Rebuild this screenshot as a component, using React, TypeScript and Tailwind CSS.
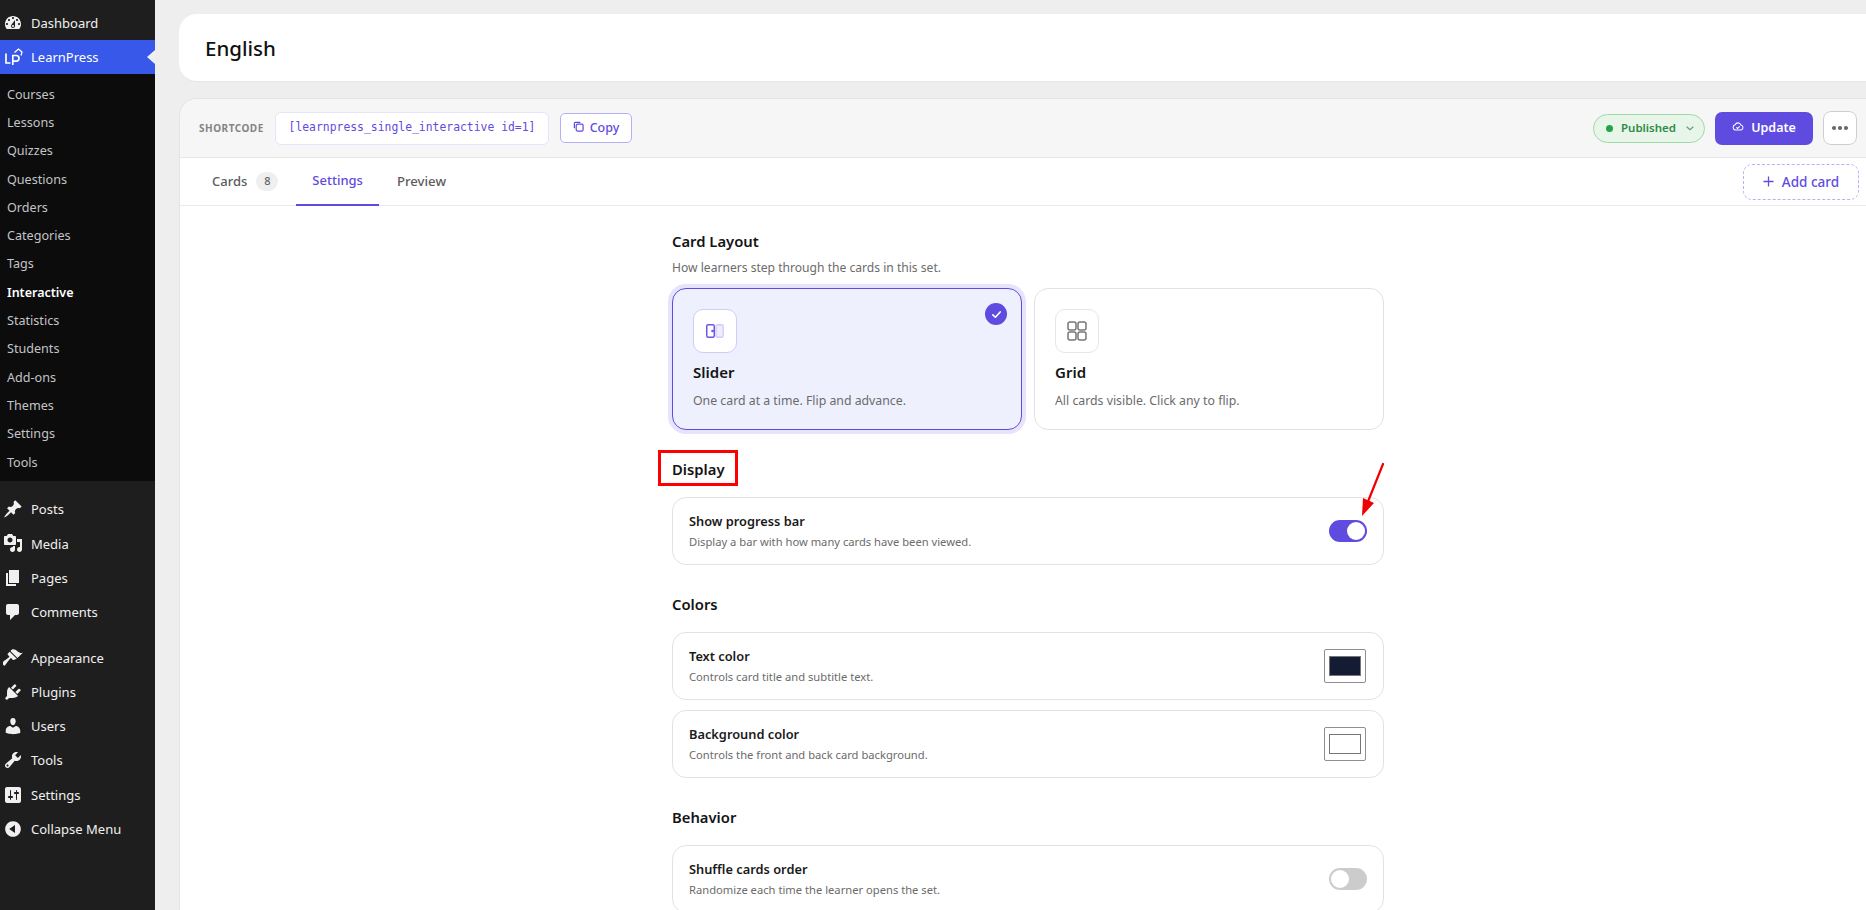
import React from "react";

const D: Record<string, string> = {
  dashboard: "M3.76 16h12.48c1.1-1.37 1.76-3.11 1.76-5 0-4.42-3.58-8-8-8s-8 3.58-8 8c0 1.89.66 3.63 1.76 5zM10 4c.55 0 1 .45 1 1s-.45 1-1 1-1-.45-1-1 .45-1 1-1zM6 6c.55 0 1 .45 1 1s-.45 1-1 1-1-.45-1-1 .45-1 1-1zm8 0c.55 0 1 .45 1 1s-.45 1-1 1-1-.45-1-1 .45-1 1-1zm-5.37 5.55L12 7v6c0 1.1-.9 2-2 2s-2-.9-2-2c0-.57.24-1.08.63-1.45zM4 10c.55 0 1 .45 1 1s-.45 1-1 1-1-.45-1-1 .45-1 1-1zm12 0c.55 0 1 .45 1 1s-.45 1-1 1-1-.45-1-1 .45-1 1-1zm-5 3c0-.55-.45-1-1-1s-1 .45-1 1 .45 1 1 1 1-.45 1-1z",
  posts: "M10.44 3.02l1.82-1.82 6.36 6.35-1.83 1.82c-1.05-.68-2.48-.57-3.41.36l-.75.75c-.92.93-1.04 2.35-.35 3.41l-1.83 1.82-2.41-2.41-2.8 2.79c-.42.42-3.38 2.71-3.8 2.29s1.86-3.39 2.28-3.81l2.79-2.79L4.1 9.36l1.83-1.82c1.05.69 2.48.57 3.4-.36l.75-.75c.93-.92 1.05-2.35.36-3.41z",
  media: "M13 11V4c0-.55-.45-1-1-1h-1.67L9 1H5L3.67 3H2c-.55 0-1 .45-1 1v7c0 .55.45 1 1 1h10c.55 0 1-.45 1-1zM7 4.5c1.38 0 2.5 1.12 2.5 2.5S8.38 9.5 7 9.5 4.5 8.38 4.5 7 5.62 4.5 7 4.5zM14 6h5v10.5c0 1.38-1.12 2.5-2.5 2.5S14 17.88 14 16.5s1.12-2.5 2.5-2.5c.17 0 .34.02.5.05V9h-3V6zm-4 8.05V13h2v3.5c0 1.38-1.12 2.5-2.5 2.5S7 17.88 7 16.5 8.12 14 9.5 14c.17 0 .34.02.5.05z",
  pages: "M6 15V2h10v13H6zm-1 1h8v2H3V5h2v11z",
  comments: "M5 2h9c1.1 0 2 .9 2 2v7c0 1.1-.9 2-2 2h-2l-5 5v-5H5c-1.1 0-2-.9-2-2V4c0-1.1.9-2 2-2z",
  appearance: "M14.48 11.06L7.41 3.99l1.5-1.5c.5-.56 2.3-.47 3.51.32 1.21.8 1.43 1.28 2.91 2.1 1.18.64 2.45 1.26 4.45.85zm-.71.71L6.7 4.7 4.93 6.47c-.39.39-.39 1.02 0 1.41l1.06 1.06c.39.39.39 1.03 0 1.42-.6.6-6.14 4.54-6.75 5.15-.39.39-.39 1.02 0 1.41l1.42 1.42c.39.39 1.02.39 1.41 0 .61-.61 4.55-6.15 5.15-6.75.39-.39 1.03-.39 1.42 0l1.06 1.06c.39.39 1.02.39 1.41 0z",
  plugins: "M13.11 4.36L9.87 7.6 8 5.73l3.24-3.24c.35-.34 1.05-.2 1.56.32.52.51.66 1.21.31 1.55zm-8 1.77l.91-1.12 9.01 9.01-1.19.84c-.71.71-2.63 1.16-3.82 1.16H6.14L4.9 17.26c-.59.59-1.54.59-2.12 0-.59-.58-.59-1.53 0-2.12l1.24-1.24v-3.88c0-1.13.4-3.19 1.09-3.89zm7.26 3.97l3.24-3.24c.34-.35 1.04-.21 1.55.31.52.51.66 1.21.31 1.55l-3.24 3.25z",
  users: "M10 9.25c-2.27 0-2.73-3.44-2.73-3.44C7 4.02 7.82 2 9.97 2c2.16 0 2.98 2.02 2.71 3.81 0 0-.41 3.44-2.68 3.44zm0 2.57L12.72 10c2.39 0 4.52 2.33 4.52 4.53v2.49s-3.65 1.13-7.24 1.13c-3.65 0-7.24-1.13-7.24-1.13v-2.49c0-2.25 1.94-4.48 4.47-4.48z",
  tools: "M16.68 9.77c-1.34 1.34-3.3 1.67-4.95.99l-5.41 6.52c-.99.99-2.59.99-3.58 0s-.99-2.59 0-3.57l6.52-5.42c-.68-1.65-.35-3.61.99-4.95 1.28-1.28 3.12-1.62 4.72-1.06l-2.89 2.89 2.82 2.82 2.86-2.87c.53 1.58.18 3.39-1.08 4.65zM3.81 16.21c.4.39 1.04.39 1.43 0 .4-.4.4-1.04 0-1.43-.39-.4-1.03-.4-1.43 0-.39.39-.39 1.03 0 1.43z",
  settings: "M18 16V4c0-1.1-.9-2-2-2H4c-1.1 0-2 .9-2 2v12c0 1.1.9 2 2 2h12c1.1 0 2-.9 2-2zM8 11h1c.55 0 1 .45 1 1s-.45 1-1 1H8v1.5c0 .28-.22.5-.5.5s-.5-.22-.5-.5V13H6c-.55 0-1-.45-1-1s.45-1 1-1h1V5.5c0-.28.22-.5.5-.5s.5.22.5.5V11zm5-2h-1c-.55 0-1-.45-1-1s.45-1 1-1h1V5.5c0-.28.22-.5.5-.5s.5.22.5.5V7h1c.55 0 1 .45 1 1s-.45 1-1 1h-1v5.5c0 .28-.22.5-.5.5s-.5-.22-.5-.5V9z",
  collapse: "M10 2.16c4.33 0 7.84 3.51 7.84 7.84s-3.51 7.84-7.84 7.84S2.16 14.33 2.16 10 5.71 2.16 10 2.16zm2 11.72V6.12L6.18 9.97z",
};

function Dash({ name }: { name: string }) {
  return (
    <svg viewBox="0 0 20 20" className="w-5 h-5 shrink-0" fill="#f0f0f0">
      <path d={D[name]} />
    </svg>
  );
}

function MenuRow({ icon, label, className = "" }: { icon: string; label: string; className?: string }) {
  return (
    <div className={`h-[34.3px] flex items-center pl-[3px] gap-2 text-[13px] text-[#f0f0f0] ${className}`}>
      <Dash name={icon} />
      <span className="pt-[2px]">{label}</span>
    </div>
  );
}

const subs = ["Courses", "Lessons", "Quizzes", "Questions", "Orders", "Categories", "Tags", "Interactive", "Statistics", "Students", "Add-ons", "Themes", "Settings", "Tools"];

function Sidebar() {
  return (
    <aside className="w-[155px] shrink-0 bg-[#1e1e1e] h-[910px] pt-[6px]">
      <MenuRow icon="dashboard" label="Dashboard" className="h-[34px]" />
      <div className="relative h-[34px] flex items-center pl-[4px] gap-[7px] bg-[#3858e9] text-[13px] text-white">
        <svg viewBox="0 0 20 20" className="w-5 h-5 shrink-0" fill="none" stroke="#fff" strokeWidth="1.7">
          <path d="M2 6.5v9.5h4.5" />
          <path d="M8.8 18V8.5h3.4a2.8 2.8 0 0 1 0 5.6H9" />
          <path d="M10.5 5.5l4-3.5 3.5 3-1 3.5" strokeWidth="1.3" />
        </svg>
        <span className="pt-[2px]">LearnPress</span>
        <span className="absolute right-0 top-[10px] w-0 h-0 border-y-[7px] border-y-transparent border-r-[8px] border-r-[#f0f0f0]" />
      </div>
      <div className="bg-[#0c0c0c] pt-[7px] h-[407px]">
        {subs.map((s) => (
          <div
            key={s}
            className={`h-[28.3px] flex items-center pl-[7px] ${s === "Interactive" ? "text-[12.5px] font-semibold text-white" : "text-[12.6px] text-[#c3c4c7]"}`}
          >
            {s}
          </div>
        ))}
      </div>
      <div className="pt-[11px]">
        {["posts:Posts", "media:Media", "pages:Pages", "comments:Comments"].map((x) => {
          const [i, l] = x.split(":");
          return <MenuRow key={l} icon={i} label={l} />;
        })}
      </div>
      <div className="pt-[11px]">
        {["appearance:Appearance", "plugins:Plugins", "users:Users", "tools:Tools", "settings:Settings", "collapse:Collapse Menu"].map((x) => {
          const [i, l] = x.split(":");
          return <MenuRow key={l} icon={i} label={l} className={l === "Collapse Menu" ? "text-[12.6px]" : ""} />;
        })}
      </div>
    </aside>
  );
}

function Toggle({ on }: { on: boolean }) {
  return on ? (
    <div className="w-[38px] h-[22px] rounded-full bg-[#5f4bdf] flex items-center justify-end pr-[2px] shrink-0">
      <div className="w-[18px] h-[18px] rounded-full bg-white" />
    </div>
  ) : (
    <div className="w-[38px] h-[22px] rounded-full bg-[#cccccc] flex items-center pl-[2px] shrink-0">
      <div className="w-[18px] h-[18px] rounded-full bg-white" />
    </div>
  );
}

function Swatch({ color }: { color: string }) {
  return (
    <div className="w-[42px] h-[34px] mr-px border border-[#8f8f8f] rounded-[2px] flex items-center justify-center bg-white shrink-0">
      <div className="w-[32px] h-[20px] border border-[#767676]" style={{ backgroundColor: color }} />
    </div>
  );
}

function Row({ title, desc, right }: { title: string; desc: string; right: React.ReactNode }) {
  return (
    <div className="h-[68px] border border-[#e2e2e2] rounded-[14px] pl-[16px] pr-[16px] flex items-center justify-between bg-white">
      <div className="flex flex-col">
        <div className="text-[12.8px] font-semibold text-[#1a1a1a] leading-[20px]">{title}</div>
        <div className="text-[11.2px] text-[#6b6b6b] leading-[18px] mt-[2px]">{desc}</div>
      </div>
      {right}
    </div>
  );
}

function LayoutCard({ active, title, desc, icon }: { active: boolean; title: string; desc: string; icon: React.ReactNode }) {
  return (
    <div
      className={`relative flex-1 h-[142px] rounded-[14px] pl-[20px] pt-[20px] ${
        active ? "border border-[#5f4bdf] bg-[#eef0fd] ring-4 ring-[#e6e3fa]" : "border border-[#e2e2e2] bg-white"
      }`}
    >
      <div className={`w-[44px] h-[44px] rounded-[10px] bg-white flex items-center justify-center border ${active ? "border-[#d0ccfa]" : "border-[#e6e6e6]"}`}>
        {icon}
      </div>
      <div className="mt-[8px] text-[15px] font-semibold text-[#141414] leading-[22px]">{title}</div>
      <div className="mt-[8px] text-[12.3px] text-[#6b6b6b] leading-[20px]">{desc}</div>
      {active && (
        <div className="absolute right-[14px] top-[14px] w-[22px] h-[22px] rounded-full bg-[#5f4bdf] flex items-center justify-center">
          <svg viewBox="0 0 12 12" className="w-[11px] h-[11px]" fill="none" stroke="#fff" strokeWidth="1.8" strokeLinecap="round" strokeLinejoin="round">
            <path d="M2 6.4 4.8 9 10 3.2" />
          </svg>
        </div>
      )}
    </div>
  );
}

function Heading({ children, className = "" }: { children: React.ReactNode; className?: string }) {
  return <div className={`text-[14.8px] font-semibold text-[#141414] leading-[22px] ${className}`}>{children}</div>;
}

export default function App() {
  return (
    <div className="relative flex w-[1866px] h-[910px] overflow-hidden bg-[#eeeeee]" style={{ fontFamily: '"Noto Sans", sans-serif' }}>
      <Sidebar />
      <main className="flex-1 min-w-0 pl-[24px] pt-[14px]">
        <div className="h-[68px] bg-white rounded-l-[18px] border-b border-[#e6e6e6] flex items-center pl-[26px] pt-[2px] text-[20.5px] font-medium text-[#111]">
          English
        </div>
        <div className="mt-[16px] bg-white rounded-tl-[18px] border-l border-t border-[#e4e4e4] h-[820px]">
          <div className="h-[59px] bg-[#f6f6f6] rounded-tl-[18px] border-b border-[#e8e8e8] flex items-center pl-[19px] pr-[9px]">
            <span className="text-[10px] font-bold tracking-[0.05em] text-[#848484] w-[76px]">SHORTCODE</span>
            <div className="w-[274px] h-[33px] bg-white border border-[#e4e4fb] rounded-[6px] flex items-center justify-center text-[11.4px] text-[#5f4bdf]" style={{ fontFamily: '"DejaVu Sans Mono", monospace' }}>
              [learnpress_single_interactive id=1]
            </div>
            <div className="ml-[11px] w-[72px] h-[30px] border border-[#b4b1fa] rounded-[5px] bg-white flex items-center justify-center gap-[6px] text-[12.5px] font-medium text-[#5f4bdf]">
              <svg viewBox="0 0 12 12" className="w-[11px] h-[11px] -mt-1" fill="none" stroke="#5f4bdf" strokeWidth="1.3">
                <rect x="3.5" y="3.5" width="7.5" height="7.5" rx="1.5" />
                <path d="M1.5 8V2.5a1 1 0 0 1 1-1H8" />
              </svg>
              Copy
            </div>
            <div className="ml-auto w-[112px] h-[29px] rounded-full bg-[#e8f5e9] border border-[#9fd8a8] flex items-center pl-[12px] text-[11.5px] font-semibold text-[#2e8b4a]">
              <span className="w-[7px] h-[7px] rounded-full bg-[#22a54a] mr-[8px]" />
              Published
              <svg viewBox="0 0 12 12" className="w-[10px] h-[10px] ml-[9px]" fill="none" stroke="#5d9f72" strokeWidth="1.5">
                <path d="M2 4.5 6 8l4-3.5" />
              </svg>
            </div>
            <div className="ml-[10px] w-[98px] h-[33px] rounded-[7px] bg-[#5f4bdf] flex items-center justify-center gap-[7px] text-[12.5px] font-semibold text-white">
              <svg viewBox="0 0 14 12" className="w-[12px] h-[11px] -mt-1" fill="none" stroke="#fff" strokeWidth="1.2">
                <path d="M4 10a3 3 0 0 1-.4-5.9A3.6 3.6 0 0 1 10.4 4.3 2.9 2.9 0 0 1 10.5 10z" />
                <path d="M5 7l1.5 1.3L9 5.8" />
              </svg>
              Update
            </div>
            <div className="ml-[10px] w-[34px] h-[34px] rounded-[8px] bg-white border border-[#cfcfcf] flex items-center justify-center gap-[2px]">
              <span className="w-[4px] h-[4px] rounded-full bg-[#666]" />
              <span className="w-[4px] h-[4px] rounded-full bg-[#666]" />
              <span className="w-[4px] h-[4px] rounded-full bg-[#666]" />
            </div>
          </div>
          <div className="h-[48px] border-b border-[#eaeaea] flex items-stretch pl-[16px] pr-[7px]">
            <div className="flex items-center gap-[9px] px-[16px] text-[13px] font-medium text-[#5c5c5c]">
              Cards
              <span className="w-[22px] h-[19px] rounded-full bg-[#efefef] flex items-center justify-center text-[11px] text-[#666]">8</span>
            </div>
            <div className="flex items-center px-[16px] ml-[2px] text-[13px] font-medium text-[#5f4bdf] border-b-2 border-[#5f4bdf] h-[48px]">Settings</div>
            <div className="flex items-center px-[18px] text-[13.2px] font-medium text-[#5c5c5c]">Preview</div>
            <div className="ml-auto mt-[6px] w-[116px] h-[36px] rounded-[9px] border border-dashed border-[#b4b1fa] flex items-center justify-center gap-[8px] text-[13.5px] font-medium text-[#5f4bdf]">
              <svg viewBox="0 0 12 12" className="w-[11px] h-[11px] -mt-[2px]" fill="none" stroke="#5f4bdf" strokeWidth="1.4">
                <path d="M6 .5v11M.5 6h11" />
              </svg>
              Add card
            </div>
          </div>
          <div className="w-[712px] ml-[492px] pt-[24px]">
            <Heading>Card Layout</Heading>
            <div className="mt-[6px] text-[12.1px] text-[#6b6b6b] leading-[20px]">How learners step through the cards in this set.</div>
            <div className="mt-[10px] flex gap-[12px]">
              <LayoutCard
                active
                title="Slider"
                desc="One card at a time. Flip and advance."
                icon={
                  <svg viewBox="0 0 18 14" className="w-[18px] h-[14px] ml-[-1px]" fill="none">
                    <rect x="10" y=".75" width="7.25" height="12.5" rx="1.5" fill="#eeecfd" stroke="#cfcaf7" strokeWidth="1.3" />
                    <rect x=".75" y=".75" width="7.5" height="12.5" rx="1.5" stroke="#6a58e2" strokeWidth="1.5" />
                    <circle cx="6.5" cy="7" r="1.3" fill="#6a58e2" />
                  </svg>
                }
              />
              <LayoutCard
                active={false}
                title="Grid"
                desc="All cards visible. Click any to flip."
                icon={
                  <svg viewBox="0 0 20 20" className="w-5 h-5" fill="none" stroke="#777" strokeWidth="1.5">
                    <rect x="1" y="1" width="8" height="8" rx="2" />
                    <rect x="11" y="1" width="8" height="8" rx="2" />
                    <rect x="1" y="11" width="8" height="8" rx="2" />
                    <rect x="11" y="11" width="8" height="8" rx="2" />
                  </svg>
                }
              />
            </div>
            <Heading className="mt-[28px]">Display</Heading>
            <div className="mt-[17px]">
              <Row title="Show progress bar" desc="Display a bar with how many cards have been viewed." right={<Toggle on />} />
            </div>
            <Heading className="mt-[28px]">Colors</Heading>
            <div className="mt-[17px] flex flex-col gap-[10px]">
              <Row title="Text color" desc="Controls card title and subtitle text." right={<Swatch color="#141c33" />} />
              <Row title="Background color" desc="Controls the front and back card background." right={<Swatch color="#ffffff" />} />
            </div>
            <Heading className="mt-[28px]">Behavior</Heading>
            <div className="mt-[17px]">
              <Row title="Shuffle cards order" desc="Randomize each time the learner opens the set." right={<Toggle on={false} />} />
            </div>
          </div>
        </div>
      </main>
      <div className="absolute left-[658px] top-[450px] w-[80px] h-[36px] border-[3px] border-[#ff0000] pointer-events-none" />
      <svg className="absolute left-[1355px] top-[460px] w-[34px] h-[60px]" viewBox="0 0 34 60" fill="none">
        <path d="M28 4 12 44" stroke="#f00000" strokeWidth="2.2" strokeLinecap="round" />
        <path d="M7 56 8 38 19 43z" fill="#f00000" />
      </svg>
    </div>
  );
}
